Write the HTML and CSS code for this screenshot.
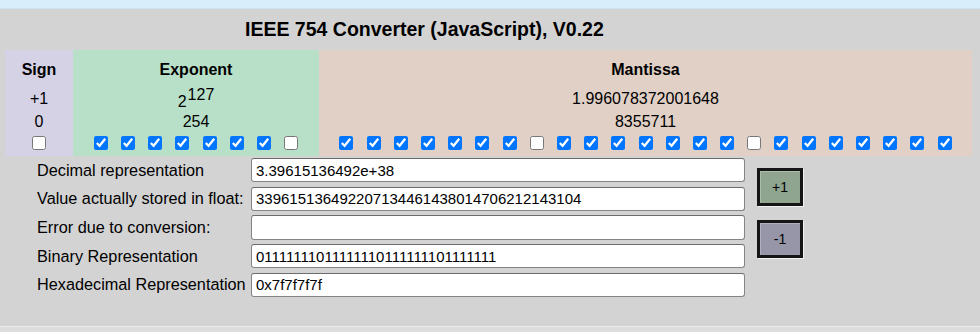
FILE: index.html
```html
<!DOCTYPE html>
<html lang="en">
<head>
  <meta charset="UTF-8" />
  <meta name="viewport" content="width=device-width, initial-scale=1.0"/>
  <title>IEEE 754 Converter</title>
  <link rel="stylesheet" href="styles.css">
</head>
<body>
  <div class="topbar"></div>
  <div class="page">
    <h1 class="title">IEEE 754 Converter (JavaScript), V0.22</h1>

    <div class="fields">
      <div class="field sign">
        <div class="head">Sign</div>
        <div class="val">+1</div>
        <div class="val">0</div>
        <div class="bits">
          <input type="checkbox">
        </div>
      </div>

      <div class="field exponent">
        <div class="head">Exponent</div>
        <div class="val pow">2<sup>127</sup></div>
        <div class="val">254</div>
        <div class="bits">
          <input type="checkbox" checked>
          <input type="checkbox" checked>
          <input type="checkbox" checked>
          <input type="checkbox" checked>
          <input type="checkbox" checked>
          <input type="checkbox" checked>
          <input type="checkbox" checked>
          <input type="checkbox">
        </div>
      </div>

      <div class="field mantissa">
        <div class="head">Mantissa</div>
        <div class="val">1.996078372001648</div>
        <div class="val">8355711</div>
        <div class="bits">
          <input type="checkbox" checked>
          <input type="checkbox" checked>
          <input type="checkbox" checked>
          <input type="checkbox" checked>
          <input type="checkbox" checked>
          <input type="checkbox" checked>
          <input type="checkbox" checked>
          <input type="checkbox">
          <input type="checkbox" checked>
          <input type="checkbox" checked>
          <input type="checkbox" checked>
          <input type="checkbox" checked>
          <input type="checkbox" checked>
          <input type="checkbox" checked>
          <input type="checkbox" checked>
          <input type="checkbox">
          <input type="checkbox" checked>
          <input type="checkbox" checked>
          <input type="checkbox" checked>
          <input type="checkbox" checked>
          <input type="checkbox" checked>
          <input type="checkbox" checked>
          <input type="checkbox" checked>
        </div>
      </div>
    </div>

    <div class="lower">
      <div class="form">
        <label>Decimal representation</label>
        <input type="text" value="3.39615136492e+38">
        <label>Value actually stored in float:</label>
        <input type="text" value="339615136492207134461438014706212143104">
        <label>Error due to conversion:</label>
        <input type="text" value="">
        <label>Binary Representation</label>
        <input type="text" value="01111111011111110111111101111111">
        <label>Hexadecimal Representation</label>
        <input type="text" value="0x7f7f7f7f">
      </div>
      <div class="buttons">
        <button class="step plus">+1</button>
        <button class="step minus">-1</button>
      </div>
    </div>
  </div>
</body>
</html>
```

FILE: styles.css
```css
body {
  margin: 0;
  font-family: "Liberation Sans", Arial, sans-serif;
  font-size: 16px;
  color: #000;
  background: #dcdcdc;
}

.topbar {
  height: 8px;
  background: #d8effb;
  border-bottom: 1px solid #cde4f0;
}

.page {
  background: #d3d3d3;
  padding: 10px 8px 29px 5px;
  border-bottom: 1px solid #ebebeb;
}

.title {
  margin: 0 0 10px 240px;
  font-size: 19.5px;
  line-height: 21px;
  font-weight: bold;
}

.fields {
  display: flex;
}

.field {
  display: flex;
  flex-direction: column;
  align-items: center;
  padding: 11px 0 6px;
}

.sign {
  width: 68px;
  background: #d5d2e6;
}

.exponent {
  width: 246px;
  background: #b8e0c8;
}

.mantissa {
  flex: 1;
  background: #e0d0c6;
}

.head {
  font-weight: bold;
  line-height: 18px;
  margin-bottom: 8px;
}

.val {
  line-height: 23px;
  height: 23px;
}

.pow {
  padding-top: 3px;
  height: 20px;
}

.pow sup {
  font-size: 16px;
  line-height: 0;
  vertical-align: 7px;
  margin-left: 1px;
}

.bits {
  display: flex;
  gap: 13.2px;
  padding-top: 3px;
}

.bits input {
  width: 14px;
  height: 14px;
  margin: 0;
}

.lower {
  display: flex;
  margin-top: 2px;
}

.form {
  display: grid;
  grid-template-columns: 209px 494px;
  column-gap: 5px;
  row-gap: 4.3px;
  padding-left: 32px;
  align-items: center;
}

.form label {
  font-size: 16.25px;
}

.form input {
  box-sizing: border-box;
  height: 24.4px;
  margin: 0;
  padding: 0 4px;
  font-family: inherit;
  font-size: 15px;
  background: #fff;
  border: 1px solid #858585;
  border-top-color: #6c6c6c;
  border-radius: 3px;
}

.buttons {
  display: flex;
  flex-direction: column;
  gap: 14px;
  padding-top: 10px;
  margin-left: 12px;
}

.step {
  box-sizing: border-box;
  width: 46px;
  height: 38px;
  font-family: inherit;
  font-size: 14px;
  color: #000;
  border: 3px solid #151515;
  box-shadow: 1px 1px 0 #f2f2f2, inset 1px 1px 0 rgba(255, 255, 255, 0.25);
  padding: 0;
  cursor: pointer;
}

.plus {
  background: #8fa590;
}

.minus {
  background: #9795a8;
}
```
